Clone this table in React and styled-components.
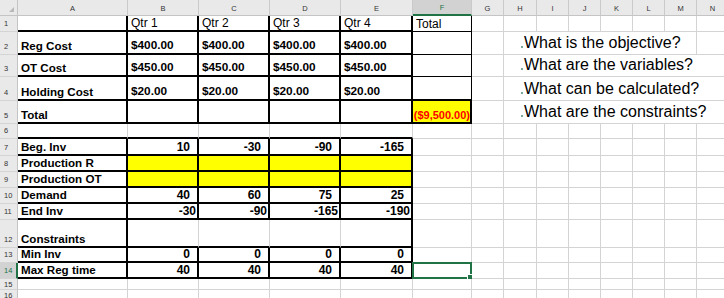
import React from 'react';
import styled, { createGlobalStyle } from 'styled-components';

const GlobalStyle = createGlobalStyle`
  html, body { margin: 0; padding: 0; background: #fff; overflow: hidden; }
  body { font-family: "Liberation Sans", Arial, sans-serif; color: #000; }
`;

const COLS = [110, 71, 71, 71, 72, 59, 32, 33, 32, 32, 32, 32, 32, 32];
const LETTERS = ['A', 'B', 'C', 'D', 'E', 'F', 'G', 'H', 'I', 'J', 'K', 'L', 'M', 'N'];
const ROWS = [16, 23, 22, 24, 23, 15, 17, 16, 16, 16, 16, 28, 15, 16, 11, 11];

const BORDER = {
  g: '1px solid #d4d4d4',
  k: '1px solid #000',
  K: '2px solid #000',
  n: '1px solid transparent',
};

const Sheet = styled.div`
  display: grid;
  grid-template-columns: 18px ${COLS.map((c) => `${c}px`).join(' ')};
  grid-template-rows: 16px ${ROWS.map((r) => `${r}px`).join(' ')};
  width: max-content;
  background: #fff;
`;

const Corner = styled.div`
  position: relative;
  box-sizing: border-box;
  background: #e9e9e9;
  border-right: 1px solid #c4c4c4;
  border-bottom: 1px solid #c4c4c4;
  &::after {
    content: '';
    position: absolute;
    right: 3px;
    bottom: 3px;
    width: 0;
    height: 0;
    border-left: 5px solid transparent;
    border-bottom: 5px solid #b9b9b9;
  }
`;

const ColHead = styled.div`
  box-sizing: border-box;
  display: flex;
  align-items: center;
  justify-content: center;
  padding-top: 2px;
  background: ${(p) => (p.$active ? '#d2d2d2' : '#e9e9e9')};
  border-right: 1px solid #cacaca;
  border-bottom: ${(p) => (p.$active ? '2px solid #217346' : '1px solid #c4c4c4')};
  color: ${(p) => (p.$active ? '#217346' : '#333')};
  font-size: 7.5px;
  line-height: 1;
`;

const RowHead = styled.div`
  box-sizing: border-box;
  display: flex;
  align-items: flex-end;
  padding: 0 0 ${(p) => (p.$small ? 1 : 4)}px 4px;
  background: ${(p) => (p.$active ? '#d2d2d2' : '#e9e9e9')};
  border-right: ${(p) => (p.$active ? '2px solid #217346' : '1px solid #c4c4c4')};
  border-bottom: 1px solid #d4d4d4;
  color: ${(p) => (p.$active ? '#217346' : '#333')};
  font-size: 7.5px;
  line-height: 1;
`;

const Cell = styled.div`
  position: relative;
  box-sizing: border-box;
  min-width: 0;
  display: flex;
  align-items: flex-end;
  justify-content: ${(p) => (p.$right ? 'flex-end' : 'flex-start')};
  grid-column: span ${(p) => p.$span || 1};
  padding: 0 ${(p) => (p.$pr == null ? 3 : p.$pr)}px 1px ${(p) => (p.$pl == null ? 3 : p.$pl)}px;
  border-right: ${(p) => BORDER[p.$r || 'g']};
  border-bottom: ${(p) => BORDER[p.$b || 'g']};
  background: ${(p) => p.$fill || '#fff'};
  white-space: nowrap;
  line-height: 1;
`;

const Label = styled.span`
  font-size: 11.6px;
  font-weight: 700;
`;

const Heading = styled.span`
  font-size: 12px;
`;

const Money = styled.span`
  font-size: 11.8px;
  font-weight: 700;
`;

const Num = styled.span`
  font-size: 12px;
  font-weight: 700;
`;

const Negative = styled.span`
  font-size: 11px;
  font-weight: 700;
  color: #ff0000;
`;

const Question = styled.span`
  font-size: 16px;
  padding-bottom: 2px;
`;

const Bullet = styled.i`
  display: inline-block;
  width: 2px;
  height: 2px;
  margin-right: 1px;
  background: #7aa99a;
  vertical-align: baseline;
`;

const Selection = styled.div`
  position: absolute;
  left: -1px;
  top: -1px;
  right: -1px;
  bottom: -1px;
  border: 2px solid #217346;
  pointer-events: none;
`;

const FillHandle = styled.div`
  position: absolute;
  right: -4px;
  bottom: -4px;
  width: 5px;
  height: 5px;
  background: #217346;
  border: 1px solid #fff;
`;

const LABELS = {
  2: 'Reg Cost', 3: 'OT Cost', 4: 'Holding Cost', 5: 'Total',
  7: 'Beg. Inv', 8: 'Production R', 9: 'Production OT', 10: 'Demand',
  11: 'End Inv', 12: 'Constraints', 13: 'Min Inv', 14: 'Max Reg time',
};

const HEADINGS = ['Qtr 1', 'Qtr 2', 'Qtr 3', 'Qtr 4'];

const MONEY = {
  2: '$400.00',
  3: '$450.00',
  4: '$20.00',
};

const NUMS = {
  7: [10, -30, -90, -165],
  10: [40, 60, 75, 25],
  11: [-30, -90, -165, -190],
  13: [0, 0, 0, 0],
  14: [40, 40, 40, 40],
};

const QUESTIONS = {
  2: 'What is the objective?',
  3: 'What are the variables?',
  4: 'What can be calculated?',
  5: 'What are the constraints?',
};

const tableBorders = (r, c) => {
  if (r >= 15) return { r: 'g', b: 'g' };
  if (r === 6) return { r: 'g', b: 'K' };
  if (r === 12) return { r: c === 0 || c === 4 ? 'K' : 'g', b: 'K' };
  return { r: 'K', b: 'K' };
};

const fBorders = (r) => {
  if (r <= 3) return { r: 'k', b: 'k' };
  if (r === 4) return { r: 'k', b: 'K' };
  if (r === 5) return { r: 'K', b: 'K' };
  return { r: 'g', b: 'g' };
};

function renderRow(r) {
  const cells = [];
  const a = tableBorders(r, 0);
  cells.push(
    <Cell key="A" $r={a.r} $b={a.b}>
      {LABELS[r] && <Label>{LABELS[r]}</Label>}
    </Cell>
  );
  for (let i = 0; i < 4; i += 1) {
    const bd = tableBorders(r, i + 1);
    const fill = r === 8 || r === 9 ? '#ffff00' : undefined;
    let content = null;
    let right = false;
    let pr;
    if (r === 1) content = <Heading>{HEADINGS[i]}</Heading>;
    if (MONEY[r]) content = <Money>{MONEY[r]}</Money>;
    if (NUMS[r]) {
      content = <Num>{NUMS[r][i]}</Num>;
      right = true;
      pr = r === 11 ? 1 : 7;
    }
    cells.push(
      <Cell key={LETTERS[i + 1]} $r={bd.r} $b={bd.b} $fill={fill} $right={right} $pr={pr}>
        {content}
      </Cell>
    );
  }
  const f = fBorders(r);
  cells.push(
    <Cell
      key="F"
      $r={f.r}
      $b={f.b}
      $fill={r === 5 ? '#ffff00' : undefined}
      $right={r === 5}
      $pr={r === 5 ? 0 : undefined}
      $pl={r === 5 ? 0 : undefined}
    >
      {r === 1 && <Heading>Total</Heading>}
      {r === 5 && <Negative>($9,500.00)</Negative>}
      {r === 14 && (
        <Selection>
          <FillHandle />
        </Selection>
      )}
    </Cell>
  );
  cells.push(<Cell key="G" />);
  if (QUESTIONS[r]) {
    const span = r === 2 ? 6 : 7;
    cells.push(
      <Cell key="H" $span={span} $r={r === 2 ? 'g' : 'n'} $pl={17}>
        <Question>
          <Bullet />
          {QUESTIONS[r]}
        </Question>
      </Cell>
    );
    if (r === 2) cells.push(<Cell key="N" />);
  } else {
    for (let i = 7; i < 14; i += 1) cells.push(<Cell key={LETTERS[i]} />);
  }
  return cells;
}

export default function App() {
  return (
    <>
      <GlobalStyle />
      <Sheet>
        <Corner />
        {LETTERS.map((l) => (
          <ColHead key={l} $active={l === 'F'}>
            {l}
          </ColHead>
        ))}
        {ROWS.map((_, idx) => {
          const r = idx + 1;
          return (
            <React.Fragment key={r}>
              <RowHead $active={r === 14} $small={r >= 15}>
                {r}
              </RowHead>
              {renderRow(r)}
            </React.Fragment>
          );
        })}
      </Sheet>
    </>
  );
}
